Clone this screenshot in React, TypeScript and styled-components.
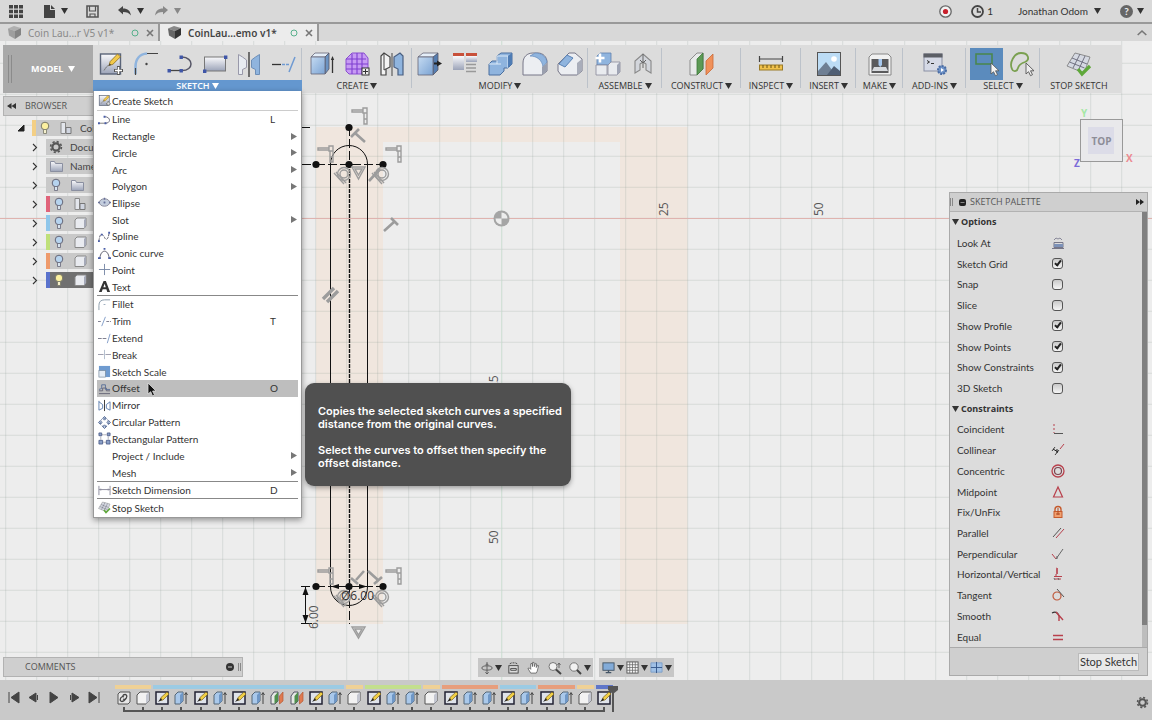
import React from 'react';
import styled, { createGlobalStyle, css } from 'styled-components';

const ui = '"Lato", "Open Sans", sans-serif';
const caps = '"Open Sans", "Noto Sans", sans-serif';

const GlobalStyle = createGlobalStyle`
  *, *::before, *::after { box-sizing: border-box; }
  html, body, #root { height: 100%; }
  body { margin: 0; background: #ededed; color: #333; font: 10px/14px ${ui}; overflow: hidden; }
  button { margin: 0; padding: 0; border: 0; background: none; color: inherit; font: inherit; }
  svg { display: block; flex: none; overflow: visible; }
  ul, h2 { margin: 0; padding: 0; list-style: none; font: inherit; }
`;

/* ---------- drawings ---------- */

type IconName = string;

const BLUE = '#8fb4de';
const LIGHT = '#c5dbf2';
const INK = '#5a6478';

const art: Record<IconName, React.ReactNode> = {
  createSketch: (
    <>
      <rect x="2.5" y="3" width="20" height="20" fill="url(#steel)" stroke={INK} strokeWidth="1.4" />
      <path d="M11 14.5l1.2-4L19.5 3l3 2.8-7.6 7.5z" fill="#f2c94a" stroke="#8a6b1d" strokeWidth=".8" />
      <path d="M11 14.5l.6-2 1.5 1.4z" fill="#333" />
      <path d="M6 19.5c2-3 3-5 5-5" stroke="#777" fill="none" />
      <path d="M20.500 15v9M16 19.500h9" stroke="#555" strokeWidth="3" />
      <path d="M20.500 16v7M17 19.500h7" stroke="#fff" strokeWidth="1.500" />
    </>
  ),
  filletBig: (
    <>
      <path d="M2.5 23v-7C2.500 8 7 3 14 2.500" fill="none" stroke={BLUE} strokeWidth="2.500" />
      <path d="M14 2.500h11M2.500 17v7" fill="none" stroke="#444" strokeWidth="1.200" />
      <circle cx="13.500" cy="13" r="1.200" fill="#444" />
    </>
  ),
  lineBig: (
    <>
      <path d="M2 19.500h13" stroke="#444" strokeWidth="1.300" />
      <path d="M15 19.500c12 0 12-13 0-13.500" fill="none" stroke="#556" strokeWidth="1.500" />
      <path d="M.5 18h3.400v3.400H.5zM12.500 18h3.400v3.400h-3.400zM12.500 4.500h3.400v3.400h-3.400z" fill="#3f56a8" />
    </>
  ),
  rectBig: (
    <>
      <rect x="2.500" y="6" width="21" height="14" fill="url(#steel)" stroke="#777" />
      <path d="M1 18.500h3.400v3.400H1zM22 4.500h3.400v3.400H22z" fill="#3f56a8" />
    </>
  ),
  mirrorBig: (
    <>
      <path d="M2.500 3.500v20h4v-5l4-2V9l-4-3z" fill="#e8ecf2" stroke="#99a" />
      <path d="M13 1v25" stroke="#333" strokeWidth="1.300" />
      <path d="M23.500 3.500v20h-4v-5l-4-2V9l4-3z" fill={BLUE} stroke="#6d8fb8" />
    </>
  ),
  extendBig: (
    <>
      <path d="M1 13.500h9" stroke="#333" strokeWidth="1.300" />
      <path d="M11 13.500h8" stroke="#6f9ad2" strokeWidth="1.500" strokeDasharray="3 1" />
      <path d="M24 6l-6 15" stroke="#6f9ad2" strokeWidth="1.500" />
    </>
  ),
  extrude: (
    <>
      <path d="M2 6l4-4h14l-4 4z" fill="#e5eef8" stroke="#667" strokeWidth=".8" />
      <path d="M16 6l4-4v16l-4 5z" fill="#6c93c2" stroke="#556" strokeWidth=".8" />
      <path d="M2 6h14v17H2z" fill="url(#sky)" stroke="#667" strokeWidth=".8" />
      <path d="M23.500 22V8" stroke="#333" strokeWidth="1.300" />
      <path d="M21.800 9l1.700-4 1.700 4z" fill="#333" />
    </>
  ),
  form: (
    <>
      <path d="M2 8l6-6h12l4 5v10l-6 6H5l-3-3z" fill="#c79bf3" stroke="#8a4fd0" />
      <path d="M2 13h22M2 18h16M2 8h20M8 3v20M13 2v21M18 2v21" fill="none" stroke="#7f3fd0" strokeWidth="1.100" />
      <rect x="18" y="17" width="7" height="7" fill="#eee" stroke="#333" />
      <path d="M19 20.500h5M21.500 18v5" stroke="#333" />
    </>
  ),
  mirrorCreate: (
    <>
      <path d="M2 5l3-3 6 4v10l-4 2v6H2z" fill="#f3f3f3" stroke="#444" strokeWidth="1.200" />
      <path d="M5 3v16l2-1M13 2v23" stroke="#444" />
      <path d="M24 5l-3-3-6 4v10l4 2v6h5z" fill={BLUE} stroke="#4a5f80" strokeWidth="1.200" />
    </>
  ),
  pressPull: (
    <>
      <path d="M1 6l5-4h15l-4 4z" fill="#e5eef8" stroke="#667" strokeWidth=".8" />
      <path d="M16 6l5-4v17l-5 5z" fill="#557db0" stroke="#556" strokeWidth=".8" />
      <path d="M1 6h15v18H1z" fill="url(#sky)" stroke="#667" strokeWidth=".8" />
      <path d="M17 12.500h4" stroke="#222" strokeWidth="2" />
      <path d="M20 9.500l5 3-5 3z" fill="#222" />
    </>
  ),
  replace: (
    <>
      <path d="M1 2h11v3H1zM14 2h11v3H14z" fill="#c8503a" />
      <path d="M1 5h11v14H1z" fill="url(#steel)" />
      <path d="M14 5h11v6H14z" fill="url(#steel)" />
      <path d="M14 13.500h10M14 17h10M14 20.500h10" stroke="#999" strokeWidth="1.500" />
    </>
  ),
  combine: (
    <>
      <path d="M10 5l4-3h11v11l-4 4h-4v3l-4 4H2V13l3-3h5z" fill={BLUE} stroke="#4a6f9f" />
      <path d="M10 5h11v12M2 13h8v-8M10 13h4" fill="none" stroke="#dceaf8" />
      <path d="M21 5l4-3v11l-4 4z" fill="#4f7cb4" />
    </>
  ),
  filletSolid: (
    <>
      <path d="M1 24V12C1 6 5 2 11 2h5c5 0 9 4 9 9v9l-5 4z" fill="#eceef2" stroke="#778" />
      <path d="M8 5l5-3c6 0 11 3 12 9l-4 5C20 9 15 5 8 5z" fill={BLUE} stroke="#5a82b5" strokeWidth=".6" />
      <path d="M20 24v-8l5-4v8z" fill="#9a9fae" />
    </>
  ),
  chamfer: (
    <>
      <path d="M1 13L12 2h6l7 6v12l-5 4H4l-3-4z" fill="#eceef2" stroke="#778" />
      <path d="M2 13l8-9 6 3-8 9z" fill={BLUE} stroke="#5a82b5" />
      <path d="M20 24V12l5-4v12z" fill="#a9adba" />
    </>
  ),
  component: (
    <>
      <path d="M2 5l3-3h11v9l-3 3H2z" fill={BLUE} stroke="#5f82ad" strokeWidth=".8" />
      <path d="M1 14h11v10H1zM13 14l3-3h9v10l-3 3h-9z" fill="#e9ebef" stroke="#889" strokeWidth=".8" />
      <path d="M22 24V14l3-3v10z" fill="#a0a5b5" />
      <path d="M5 2.500v9M.5 7h9" stroke="#fff" strokeWidth="2.500" />
    </>
  ),
  joint: (
    <>
      <path d="M5 22V10l8-7 8 7v12l-5-3v-6l-3-2-3 2v6z" fill="#d3d6dc" stroke="#888" strokeWidth="1.100" />
      <path d="M13 3v14M10 9l3 3 3-3" fill="none" stroke="#666" />
    </>
  ),
  construct: (
    <>
      <path d="M1 9l7-7h6v16l-6 6H1z" fill="#e8eaea" stroke="#777" strokeWidth=".8" />
      <path d="M8 8l6-6v16l-6 6z" fill="#5c9a55" stroke="#3e7a3a" strokeWidth=".8" />
      <path d="M17 10l7-7v14l-7 7z" fill="#f0915a" stroke="#c96a38" strokeWidth=".8" />
    </>
  ),
  inspect: (
    <>
      <path d="M1.500 8h23M1.500 5v6M24.500 5v6" stroke="#444" strokeWidth="1.200" />
      <rect x="1.500" y="14" width="23" height="5" fill="#f0c14b" stroke="#9a7a26" />
      <path d="M5 14v3M9 14v3M13 14v3M17 14v3M21 14v3" stroke="#6b5313" />
    </>
  ),
  insert: (
    <>
      <rect x="1.500" y="1.500" width="23" height="23" fill="#bcdcf5" stroke="#555" />
      <circle cx="18" cy="8" r="2.800" fill="#fff" />
      <path d="M2 20l8-9 6 8v5H2z" fill="#6f7f93" />
      <path d="M11 24l7-9 6 5v4z" fill="#4f5e73" />
    </>
  ),
  make: (
    <>
      <path d="M2 6l3-3h16l3 3v18H2z" fill="#f1f1f1" stroke="#888" />
      <rect x="4.500" y="8" width="17" height="14" fill="#5a5a5c" />
      <path d="M11.500 8h3.500v6l-1.700 2-1.800-2z" fill="#a7c8ee" />
      <path d="M7 16h12l2 4H5z" fill="#d7dade" />
    </>
  ),
  addins: (
    <>
      <rect x="2" y="3" width="18" height="17" fill="#d6dae6" stroke="#8a90a4" />
      <path d="M1.500 2.500h19v4h-19z" fill="#5c5f66" />
      <path d="M5 9.500l2.500 1.500L5 12.500M9 12.500h3" fill="none" stroke="#333" />
      <circle cx="20" cy="19" r="4" fill="#6f93c8" stroke="#4a6da5" strokeWidth="2" strokeDasharray="2 1" />
      <path d="M19 17l3 2-3 2z" fill="#fff" />
    </>
  ),
  select: (
    <>
      <rect x="2" y="3" width="16" height="10" fill="none" stroke="#49864a" strokeWidth="1.500" />
      <path d="M17 12v11l2.500-2.300 2 4 2-1-2-3.900H25z" fill="#f3f3f3" stroke="#555" strokeWidth=".8" />
    </>
  ),
  lasso: (
    <>
      <path d="M3 18C0 12 5 2 12 2c8 0 9 7 4 9-3 1-6 2-7 6-1 4-5 4-6 1z" fill="none" stroke="#7aa050" strokeWidth="1.800" />
      <path d="M17 12v11l2.500-2.300 2 4 2-1-2-3.900H25z" fill="#eee" stroke="#555" strokeWidth=".9" />
    </>
  ),
  stopSketch: (
    <>
      <path d="M9 2l15 4-6 16L1 15z" fill="#d5d9e2" stroke="#777" strokeWidth=".8" />
      <path d="M6 7l15 6M3.500 11l15 6M14 3l-7 14M19 5l-7 15" stroke="#667" strokeWidth=".9" fill="none" />
      <path d="M12 18l4 5 8-8" fill="none" stroke="#5fa83a" strokeWidth="3.200" />
    </>
  ),
};

function Art({ name, size = 26 }: { name: IconName; size?: number }) {
  return <svg width={size} height={size} viewBox="0 0 26 26" fill="none" aria-hidden="true">{art[name]}</svg>;
}

/* 14 px drawings for menus, palette, tree and timeline */
const SQ = '#4a5ea8';
const RED = '#b8404c';
const mini: Record<IconName, React.ReactNode> = {
  line: (<><path d="M1 11h8" stroke="#777" /><path d="M8 11c6 0 6-7-1-7" stroke="#667" /><path d="M0 10h2v2H0zM7 10h2v2H7zM6 3h2v2H6z" fill={SQ} /></>),
  ellipse: (<><ellipse cx="7" cy="7" rx="5.500" ry="4" fill="#c3cddd" stroke="#889" /><path d="M6 7h2M7 6v2M0 7h2M12 7h2M7 2v2" stroke="#667099" strokeWidth="1.500" /></>),
  spline: (<><path d="M1 12C2 2 5 4 7 8s4 2 5-5" stroke="#556" strokeDasharray="3 1" /><path d="M0 11h2v2H0zM11 2h2v2h-2zM3 4h2v2H3z" fill={SQ} /></>),
  conic: (<><path d="M2 12C3 2 11 2 12 12" stroke="#556" /><path d="M0 11h3v2H0zM11 11h3v2h-3zM6 1h2v2H6z" fill={SQ} /></>),
  point: <path d="M7 1v12M1 7h12" stroke="#7787a5" />,
  text: <path d="M1 13L6 1h2.500L13 13h-3l-1-3H5l-1 3zM5.800 7.800h2.600L7.100 4z" fill="#333" />,
  fillet: (<><path d="M1 13V8c0-4 2-6 6-6h6" stroke="#89a" /><path d="M6 7h2" stroke="#9ab" /></>),
  trim: (<><path d="M0 7h4M9 7h5" stroke="#778" strokeDasharray="3 1" /><path d="M8 2L4 12" stroke="#7f9cc8" /></>),
  extend: (<><path d="M0 7h9" stroke="#778" strokeDasharray="4 1" /><path d="M13 2l-3 10" stroke="#7f9cc8" /></>),
  break: (<><path d="M0 7h6M8 7h6" stroke="#99a" /><path d="M7 2v10" stroke="#b0bccc" /></>),
  scale: (<><rect x="1" y="1" width="12" height="12" fill="#6f9bd0" /><rect x="1" y="6" width="7" height="7" fill="#e5edf6" stroke="#789" strokeWidth=".7" /></>),
  offset: (<><path d="M1 12.500h12M1 9.500h4v-3h4v3h4" stroke="#667" /><path d="M1 8l3-1V3h4v5h5" stroke="#5a6f98" /></>),
  mirror: (<><path d="M1 2v10M1 3l4 3v4l-4 2M13 3L9 6v4l4 2z" stroke="#5f7fb0" /><path d="M7 1v12" stroke="#333" /></>),
  circular: (<g fill="#b8c9e2" stroke="#4a5f8a" strokeWidth=".9"><path d="M7 .5l2 2-2 2-2-2zM7 9.500l2 2-2 2-2-2zM2.500 5l2 2-2 2-2-2zM11.500 5l2 2-2 2-2-2z" /><circle cx="7" cy="7" r="4.500" fill="none" strokeDasharray="2 2" /></g>),
  rectangular: (<><path d="M4 3h6M3 5v4M11 5v4M4 11h6" stroke="#667" strokeDasharray="1 1" /><path d="M1 1h3v3H1zM10 1h3v3h-3zM1 9h4v4H1zM9 9h4v4H9z" fill="#8a9fc6" stroke="#3f5080" strokeWidth=".8" /></>),
  dimension: <path d="M1 2v10M13 2v10M1 6h12M3 5v2M11 5v2" stroke="#889" />,
  lookAt: (<><path d="M1 12.500h12M3 6.500h9v5H3z" stroke="#778" /><path d="M3 8h9v3H3z" fill="#7d92b8" /><path d="M3 4l2-2 2 1 2-1 2 2" stroke="#889" /></>),
  coincident: (<><path d="M3 2v9" stroke={RED} strokeDasharray="2 2" /><path d="M3 11.500h9" stroke="#555" /></>),
  collinear: (<><path d="M1 8l3-4M4 12l4-5" stroke="#444" /><path d="M2 6l5 3M6 6v4" stroke="#222" /><path d="M9 6l4-5" stroke={RED} /></>),
  concentric: (<><circle cx="7" cy="7" r="6" stroke={RED} strokeWidth="1.300" /><circle cx="7" cy="7" r="3.500" stroke="#7a4550" strokeWidth="1.200" /></>),
  midpoint: <path d="M7 2l4.500 10h-9z" stroke={RED} strokeWidth="1.200" />,
  fix: (<><path d="M4 7V4.500a3 3 0 016 0V7" stroke="#c55a2c" strokeWidth="1.400" /><rect x="3" y="6.500" width="8" height="6" fill="#f0a070" stroke="#c55a2c" /><path d="M5 9h4M7 3v7" stroke="#b04a20" /></>),
  parallel: (<><path d="M2 11l8-9" stroke="#555" /><path d="M5 12l8-9" stroke={RED} /></>),
  perpendicular: (<><path d="M1 7l4 5" stroke={RED} /><path d="M5 12l7-10M6 12V9" stroke="#666" /></>),
  horizontal: (<><path d="M5 1l2 1-2 1 2 1-2 1 2 1-2 1v2M3 9.500h8M4 12h6" stroke={RED} /><path d="M3 11l1 2M7 11l1 2" stroke="#666" /></>),
  tangent: (<><circle cx="6" cy="8" r="4" stroke="#c05a3c" strokeWidth="1.200" /><path d="M6 1l7 8" stroke="#555" /></>),
  smooth: (<><path d="M1 4c4-2 6 0 7 3" stroke="#333" strokeWidth="1.300" /><path d="M5 3l7 8M8 6v6" stroke={RED} strokeWidth="1.400" /></>),
  equal: <path d="M2 5.500h10M2 9.500h10" stroke={RED} strokeWidth="1.300" />,
  bulb: (<><circle cx="7" cy="5" r="3.800" fill="#b6d3ee" stroke="#667" /><path d="M5.500 8.500h3v4h-3z" fill="#d7e3ee" stroke="#667" strokeWidth=".8" /></>),
  bulbOn: (<><circle cx="7" cy="5" r="3.800" fill="#fbf0a0" stroke="#776" /><path d="M5.500 8.500h3v4h-3z" fill="#f4efcc" stroke="#776" strokeWidth=".8" /></>),
  folder: (<><path d="M1.500 12.500v-10h4l1 2h7v8z" fill="url(#steel)" stroke="#8a8fa0" /></>),
  parts: (<><path d="M2 1.500h4.500v11H2z" fill="#e3e6ec" stroke="#888" /><path d="M7 6.500h5v6H7z" fill="#d0d5e0" stroke="#777" /></>),
  body: (<><path d="M2 4l2-2h9v8l-2 2.500H2z" fill="#e9ebf0" stroke="#888" /><path d="M11 12V4l2-2v8z" fill="#a5a9b8" /></>),
  gear: (<><circle cx="7" cy="7" r="3.600" stroke="#555" strokeWidth="2.200" /><circle cx="7" cy="7" r="5.400" stroke="#555" strokeWidth="1.600" strokeDasharray="2.200 2.040" /></>),
  tLink: (<><path d="M1 3l2-2h10v10l-2 2H1z" fill="#e6e6e6" stroke="#555" /><path d="M7 6l-1.500-.5c-3 1.500-3 5-.5 5s3-2 4-3M6 8l1.500.5c3-1.500 3-5 .5-5S6 5 5.500 6" stroke="#444" strokeWidth="1.300" /></>),
  tBox: (<><path d="M1 4l3-3h9v9l-3 3H1z" fill="#f2f2f2" stroke="#555" /><path d="M10 13V4l3-3v9z" fill="#c3c6d0" /></>),
  tSketch: (<><rect x="1" y="1" width="12" height="12" fill="#dfe3ea" stroke="#223" strokeWidth="1.500" /><path d="M5 9.500l1-3L12 1l2 2-6 6z" fill="#f1cf45" stroke="#776020" strokeWidth=".7" /><path d="M3 11l3-4 1 2z" fill="#222" /></>),
  tExtrude: (<><path d="M1 4l3-3h5v9l-3 3H1z" fill="#a9c8ea" stroke="#567" /><path d="M6 13V4l3-3v9z" fill="#6f97c6" /><path d="M12 13V2M10.500 4L12 1.500 13.500 4" stroke="#444" /></>),
  tPlane: (<><path d="M1 5l3-4h4v9l-3 3H1z" fill="#e4e8e4" stroke="#556" /><path d="M4.500 13V5L8 1v9z" fill="#4f8f4c" /><path d="M9.500 13V5L13 1v9z" fill="#e07a50" stroke="#b55a34" strokeWidth=".7" /></>),
  orbit: (<><ellipse cx="7" cy="7" rx="6" ry="2.500" stroke="#555" /><path d="M7 0v14M5 12l2 2 2-2M9 4L7 2 5 4" stroke="#555" /></>),
  lookNav: (<><rect x="2" y="5" width="10" height="8" fill="#ddd" stroke="#444" /><path d="M4 8h6v2H4z" stroke="#444" /><path d="M3 3l2-1M6 2h2M9 2l2 1" stroke="#444" /></>),
  hand: <path d="M4 13L1 8l1.500-.5L4 9V3l1.500-.5L6 6V1.500h1.500L8 6l1-3.500 1.200.5L10 7l1.500-2.500 1 .5-1.500 6-1 2z" fill="#fff" stroke="#555" strokeWidth=".8" />,
  zoom: (<><circle cx="5" cy="5.500" r="4" fill="#f2f2f2" stroke="#777" /><path d="M8 8.500l5 4.500" stroke="#444" strokeWidth="2" /><path d="M11 2v5M9.500 4L11 2l1.500 2" stroke="#666" /></>),
  zoomWin: (<><circle cx="6" cy="6" r="4.200" fill="#f2f2f2" stroke="#777" /><path d="M9 9l4 4" stroke="#444" strokeWidth="2" /></>),
  monitor: (<><rect x="1" y="2" width="12" height="8" fill="#82abd8" stroke="#456" /><path d="M7 10v2M4 12.500h6" stroke="#456" strokeWidth="1.500" /></>),
  grid: (<><rect x="1" y="1" width="12" height="12" fill="#f6f6f6" stroke="#555" /><path d="M4 1v12M7 1v12M10 1v12M1 4h12M1 7h12M1 10h12" stroke="#666" strokeWidth=".8" /></>),
  split: (<><path d="M1 2h12v10H1z" fill="#9fc0e6" stroke="#7d9fc8" /><path d="M7 1v12M1 7h12" stroke="#34568a" /></>),
  first: <path d="M2 2v11M12 2v11L4 7.500z" fill="#444" stroke="#444" />,
  prev: <path d="M9 3v9L2 7.500zM10.500 5v5" fill="#444" stroke="#444" />,
  play: <path d="M3 2v11l8-5.500z" fill="#444" stroke="#444" />,
  next: <path d="M5 3v9l7-4.500zM3.500 5v5" fill="#444" stroke="#444" />,
  last: <path d="M12 2v11M2 2v11l8-5.500z" fill="#444" stroke="#444" />,
};

function Mini({ name, size = 14 }: { name: IconName; size?: number }) {
  if (art[name]) return <Art name={name} size={size} />;
  return <svg width={size} height={size} viewBox="0 0 14 14" fill="none" aria-hidden="true">{mini[name]}</svg>;
}

function Caret({ size = 7, color = '#333' }: { size?: number; color?: string }) {
  return <svg width={size} height="6" viewBox="0 0 8 6" preserveAspectRatio="none" aria-hidden="true"><path d="M0 0h8L4 6z" fill={color} /></svg>;
}

/* ---------- page frame ---------- */

const Page = styled.div`
  display: flex;
  flex-direction: column;
  height: 100%;
`;

const TopBar = styled.header`
  display: flex;
  align-items: center;
  flex: none;
  height: 24px;
  padding: 0 8px 0 9px;
  background: #d9d9d9;
  border-bottom: 2px solid #999;
`;

const BarButton = styled.button<{ $gap: number; $inner?: number }>`
  display: flex;
  align-items: center;
  gap: ${(p) => p.$inner ?? 6}px;
  margin-right: ${(p) => p.$gap}px;
`;

const Spacer = styled.div`
  flex: 1;
`;

const TabBar = styled.nav`
  display: flex;
  flex: none;
  height: 17px;
  background: #d8d8d8;
`;

const Tab = styled.div<{ $active?: boolean }>`
  display: flex;
  align-items: center;
  width: ${(p) => (p.$active ? 159 : 160)}px;
  padding: 0 4px 0 8px;
  border-right: 2px solid #999;
  color: #8a8a8a;
  font: 10px/16px "Noto Sans", sans-serif;
  ${(p) => p.$active && css`
    background: #ececec;
    color: #444;
    font-weight: 600;
  `}
  span { flex: 1; padding-left: 7px; white-space: nowrap; }
  button { margin-left: 7px; }
`;

const CollapseButton = styled.button`
  margin-left: auto;
  padding-right: 5px;
`;

const Workspace = styled.main`
  position: relative;
  display: grid;
  grid-template: auto 1fr auto / 1fr auto 1fr;
  flex: 1;
  min-height: 0;
  padding: 4px 3px 3px;
`;

const CanvasLayer = styled.div`
  position: absolute;
  inset: 0;
  overflow: hidden;
`;

/* ---------- toolbar ---------- */

const Toolbar = styled.div`
  position: relative;
  grid-column: 1 / -1;
  display: flex;
  height: 48px;
  margin-right: 27px;
  background: #dcdcdc;
`;

const Mode = styled.button`
  display: flex;
  align-items: center;
  width: 90px;
  padding-left: 5px;
  gap: 5px;
  background: #a9a9a9;
  color: #fff;
  font: 700 9px/12px ${caps};
  &::before {
    content: '';
    width: 4px;
    height: 28px;
    margin-right: 14px;
    border: solid #8b8b8b;
    border-width: 0 1px;
  }
`;

const Group = styled.section<{ $w: number; $pad: number }>`
  display: flex;
  flex-direction: column;
  width: ${(p) => p.$w}px;
  position: relative;
  &:not(:last-child)::after {
    content: '';
    position: absolute;
    right: 0;
    top: 3px;
    bottom: 5px;
    border-right: 1px solid #bcc2ca;
  }
  > div {
    display: flex;
    flex: 1;
    padding: 3px ${(p) => p.$pad}px 0;
  }
`;

const Tool = styled.button<{ $on?: boolean }>`
  display: flex;
  flex: 1;
  align-items: center;
  justify-content: center;
  height: 32px;
  ${(p) => p.$on && css`
    margin: 0 2px;
    background: #5b8bbd;
  `}
`;

const GroupLabel = styled.button<{ $open?: boolean }>`
  display: flex;
  align-items: center;
  justify-content: center;
  gap: 2px;
  height: 11px;
  margin-bottom: 2px;
  white-space: nowrap;
  font: 9px/11px ${caps};
  ${(p) => p.$open && css`
    position: relative;
    z-index: 1;
    background: #6497cf;
    color: #fff;
    font-weight: 600;
  `}
`;

/* ---------- drop-down menu ---------- */

const Menu = styled.div`
  position: absolute;
  z-index: 5;
  left: 93px;
  top: 50px;
  width: 209px;
  padding: 0 3px 1px;
  background: #fff;
  border: 1px solid #999;
  border-top: 0;
  box-shadow: 0 2px 6px rgba(0, 0, 0, 0.4);
`;

const MenuGroup = styled.div<{ $h: number }>`
  display: grid;
  grid-auto-rows: 1fr;
  height: ${(p) => p.$h}px;
  & + & { border-top: 1px solid #888; }
  &:first-child + & { border-color: #ccc; }
`;

const MenuItem = styled.button<{ $hover?: boolean }>`
  display: grid;
  grid-template-columns: 13px 1fr 20px 7px;
  align-items: center;
  gap: 1px;
  padding-left: 1px;
  text-align: left;
  background: ${(p) => (p.$hover ? '#bebebe' : 'none')};
`;

const Pointer = styled.svg`
  position: absolute;
  z-index: 7;
  left: 147px;
  top: 341px;
`;

const Tooltip = styled.div`
  position: absolute;
  z-index: 6;
  left: 305px;
  top: 342px;
  width: 266px;
  padding: 22px 8px 16px 13px;
  border-radius: 9px;
  background: #505050;
  color: #fff;
  box-shadow: 0 2px 5px rgba(0, 0, 0, 0.35);
  font: 600 11px/13px Inter, sans-serif;
  p { margin: 0 0 13px; }
  p:last-child { margin: 0; }
`;

/* ---------- browser tree ---------- */

const Browser = styled.aside`
  position: relative;
  grid-column: 1;
  grid-row: 2;
  width: 240px;
  margin-top: 3px;
`;

const PanelTitle = styled.h2`
  display: flex;
  align-items: center;
  height: 20px;
  background: #cfcfcf;
  border: 1px solid #b2b2b2;
  color: #555;
  font: 9px/12px ${caps};
`;

const Tree = styled.ul`
  display: flex;
  flex-direction: column;
  gap: 3px;
  width: 90px;
  padding-top: 4px;
`;

const TreeRow = styled.li<{ $root?: boolean; $color?: string; $active?: boolean }>`
  display: flex;
  height: 16px;
  padding-left: ${(p) => (p.$root ? 14 : 28)}px;
  > button { display: flex; align-items: center; width: 15px; }
  > div {
    display: flex;
    align-items: center;
    gap: 7px;
    flex: 1;
    min-width: 0;
    overflow: hidden;
    padding-left: ${(p) => (p.$color ? 2 : 3)}px;
    border-left: ${(p) => (p.$color ? `4px solid ${p.$color}` : '0')};
    background: ${(p) => (p.$active ? '#707070' : '#c9c9c9')};
    white-space: nowrap;
    color: #444;
  }
  span { flex: 1; min-width: 0; overflow: hidden; }
`;

/* ---------- right column ---------- */

const Side = styled.aside`
  position: relative;
  grid-column: 3;
  grid-row: 2 / 4;
  justify-self: end;
  display: flex;
  flex-direction: column;
  width: 199px;
  margin: 0 1px 1px 0;
`;

const Cube = styled.svg`
  width: 60px;
  height: 99px;
  align-self: flex-end;
  margin-right: 15px;
  font: 700 10px ${caps};
`;

const Palette = styled.section`
  display: flex;
  flex-direction: column;
  flex: 1;
  min-height: 0;
  background: #dcdcdc;
  border: 1px solid #aaa;
  h2 { height: 19px; border-width: 0 0 1px; padding: 0 3px 0 0; }
`;

const Grip = styled.i`
  width: 3px;
  height: 8px;
  border: solid #888;
  border-width: 0 1px;
`;

const PaletteBody = styled.div`
  display: flex;
  flex: 1;
  min-height: 0;
`;

const Rows = styled.div`
  display: grid;
  grid-auto-rows: 1fr;
  flex: 1;
`;

const SectionHead = styled.button`
  display: flex;
  align-items: center;
  gap: 2px;
  padding-left: 2px;
  font: 700 9px/12px ${caps};
`;

const Row = styled.div`
  display: grid;
  grid-template-columns: 94px 14px;
  align-items: center;
  padding-left: 7px;
  white-space: nowrap;
`;

const Check = styled.input`
  appearance: none;
  width: 11px;
  height: 11px;
  margin: 0 1px;
  border: 1px solid #555;
  border-radius: 3px;
  background: linear-gradient(#c9c9c9, #f5f5f5);
  &:checked::after {
    content: '';
    display: block;
    width: 4px;
    height: 7px;
    margin: 0 0 0 3px;
    border: solid #222;
    border-width: 0 2px 2px 0;
    transform: rotate(38deg);
  }
`;

const Scroll = styled.div`
  width: 5px;
  background: #bdbdbd;
  &::before { content: ''; display: block; height: 95%; background: #808080; }
`;

const PaletteFoot = styled.footer`
  display: flex;
  justify-content: flex-end;
  align-items: center;
  height: 28px;
  padding-right: 8px;
  background: #cfcfcf;
  border-top: 1px solid #aaa;
  button {
    width: 61px;
    height: 18px;
    background: #e9e9e9;
    border: 1px solid #bbb;
    font: 11px/14px ${ui};
    white-space: nowrap;
  }
`;

/* ---------- bottom ---------- */

const Comments = styled.section`
  position: relative;
  grid-column: 1;
  grid-row: 3;
  width: 240px;
  h2 { padding: 0 1px 0 21px; gap: 4px; }
  span { flex: 1; }
`;

const Nav = styled.div`
  position: relative;
  grid-column: 2;
  grid-row: 3;
  display: flex;
  gap: 6px;
  height: 19px;
  margin-top: 1px;
  > div { display: flex; align-items: center; background: #c7c7c7; }
  > div + div { padding: 0 1px 0 2px; }
`;

const NavButton = styled.button<{ $w: number }>`
  display: flex;
  align-items: center;
  justify-content: center;
  gap: 2px;
  width: ${(p) => p.$w}px;
`;

const TimelineBar = styled.footer`
  position: relative;
  display: flex;
  flex: none;
  height: 40px;
  padding: 5px 3px 0 4px;
  background: #c9c9c9;
`;

const Playback = styled.div`
  display: flex;
  height: 24px;
  margin-right: 10px;
  button { display: flex; align-items: center; justify-content: center; width: 20px; }
`;

const Track = styled.div`
  position: relative;
  display: grid;
  grid-template-columns: repeat(26, 1fr);
  grid-template-rows: 4px 18px 3px 2px;
  width: 500px;
`;

const Strip = styled.i<{ $n: number; $c: string }>`
  grid-column: span ${(p) => p.$n};
  margin: 0 1px;
  background: ${(p) => p.$c};
`;

const Feature = styled.button`
  display: flex;
  align-items: center;
  justify-content: center;
`;

const Tick = styled.i`
  width: 2px;
  margin: 0 auto;
  background: #555;
`;

const Baseline = styled.i`
  grid-column: 1 / -1;
  margin: 0 9px;
  background: #555;
`;

const Playhead = styled.svg`
  position: absolute;
  right: -4px;
  top: 1px;
`;

/* ---------- model canvas ---------- */

const Hammer = ({ x, y }: { x: number; y: number }) => (
  <path d={`M${x} ${y + 2}h11v2h-11zM${x + 11} ${y}h4v5h-4zM${x + 12} ${y + 5}h3v6h-3zM${x + 12} ${y + 11}h3v5h-3z`} />
);

const Ring = ({ x, y }: { x: number; y: number }) => (
  <>
    <circle cx={x} cy={y} r="6.500" />
    <circle cx={x} cy={y} r="4" />
    <path d={`M${x - 10} ${y - 1}l10 11M${x - 8} ${y - 2}l10 11`} />
  </>
);

const cols = Array.from({ length: 60 }, (_, i) => 5.7 + i * 31);
const rows = Array.from({ length: 40 }, (_, i) => 32.3 + i * 31);

function Canvas() {
  return (
    <CanvasLayer>
      <svg width="100%" height="100%" fontFamily="Open Sans, sans-serif">
        <defs>
          <linearGradient id="steel" x1="0" y1="0" x2="0" y2="1"><stop offset="0" stopColor="#fafafc" /><stop offset="1" stopColor="#9ba3b8" /></linearGradient>
          <linearGradient id="sky" x1="0" y1="0" x2="1" y2="1"><stop offset="0" stopColor={LIGHT} /><stop offset="1" stopColor="#7ba3d3" /></linearGradient>
        </defs>
        <g transform="translate(0 -41)">
          <path d="M316 127h371.500v497H620V142H383v482h-67z" fill="#f0e6de" />
          <g stroke="#8a9a90" strokeOpacity=".22">
            {cols.map((x) => <path key={x} d={`M${x} 0V1400`} />)}
            {rows.map((y) => <path key={y} d={`M0 ${y}H2000`} />)}
          </g>
          <path d="M0 218.500H2000" stroke="#dfb3af" />
          <path d="M501.700 0V1400" stroke="#cfe3d5" strokeOpacity=".7" />
          <g fill="#a5a5a5"><circle cx="501.500" cy="218.500" r="8" /><path d="M501.500 212.500a6 6 0 016 6h-6zM501.500 224.500a6 6 0 01-6-6h6z" fill="#ededed" /></g>

          <g stroke="#111" fill="none">
            <path d="M330.500 587V164a18.500 18.500 0 0137 0v423a18.500 18.500 0 01-37 0z" />
            <path d="M349.500 127v37M349.500 587v37" strokeDasharray="9 3" />
            <path d="M349.500 164v423" strokeWidth="1.400" strokeDasharray="4 1" />
            <path d="M302 164.500h14M316 164.500h67M316 586.500h67" strokeDasharray="9 3" />
            <path d="M302 127.500h8M301 586.500h9M301 623.500h11M305.500 587v36M333 586.500h34" />
          </g>
          <g fill="#111">
            <path d="M305.500 587l3 8h-6zM305.500 623l3-8h-6zM331 586.500l8-2.500v5zM367 586.500l-8-2.500v5z" />
            {[[349, 127], [316, 164], [349, 164], [383, 164], [316, 586], [349, 586], [383, 586]].map(([x, y]) => (
              <circle key={`${x}-${y}`} cx={x} cy={y + 0.5} r="3.600" />
            ))}
          </g>
          <g stroke="#9c9c9c" fill="none" strokeWidth="1.400">
            <Hammer x={352} y={108} /><Hammer x={318} y={146} /><Hammer x={386} y={146} />
            <Hammer x={318} y={568} /><Hammer x={386} y={568} />
            <Ring x={344} y={174} /><Ring x={382} y={174} /><Ring x={344} y={597} /><Ring x={382} y={597} />
            <path d="M352 167h13l-6.500 12zM355 169h7l-3.500 6zM352 627h13l-6.500 11zM355 629h7l-3.500 6z" />
            <path d="M351 137l8-8M355 133l10 9M384 231l10-9M391 218l7 7M364 571l-8 9M351 578l7 6M368 571l10 9M374 584l8-7M369 181l11-12" strokeWidth="2.600" />
            <path d="M323 299l11-11M327 302l11-11" strokeWidth="3.400" />
          </g>
          <g fill="#555" fontSize="12">
            <text transform="translate(668 216) rotate(-90)">25</text>
            <text transform="translate(823 216) rotate(-90)">50</text>
            <text transform="translate(498 389) rotate(-90)">25</text>
            <text transform="translate(498 544) rotate(-90)">50</text>
            <text transform="translate(318 629) rotate(-90)">6.00</text>
            <text x="341" y="600" fill="#333">Ø6.00</text>
          </g>
        </g>
      </svg>
    </CanvasLayer>
  );
}

/* ---------- data ---------- */

const groups: { label: string; w: number; pad: number; icons: string[]; on?: string; plain?: boolean }[] = [
  { label: 'CREATE', w: 110, pad: 2, icons: ['extrude', 'form', 'mirrorCreate'] },
  { label: 'MODIFY', w: 176, pad: 1, icons: ['pressPull', 'replace', 'combine', 'filletSolid', 'chamfer'] },
  { label: 'ASSEMBLE', w: 74, pad: 2, icons: ['component', 'joint'] },
  { label: 'CONSTRUCT', w: 79, pad: 0, icons: ['construct'] },
  { label: 'INSPECT', w: 60, pad: 0, icons: ['inspect'] },
  { label: 'INSERT', w: 55, pad: 0, icons: ['insert'] },
  { label: 'MAKE', w: 47, pad: 0, icons: ['make'] },
  { label: 'ADD-INS', w: 63, pad: 0, icons: ['addins'] },
  { label: 'SELECT', w: 74, pad: 2, icons: ['select', 'lasso'], on: 'select' },
  { label: 'STOP SKETCH', w: 78, pad: 0, icons: ['stopSketch'], plain: true },
];

type Item = [label: string, icon?: string, key?: string];
const menu: { h: number; items: Item[] }[] = [
  { h: 19, items: [['Create Sketch', 'createSketch']] },
  {
    h: 185,
    items: [['Line', 'line', 'L'], ['Rectangle', '', '>'], ['Circle', '', '>'], ['Arc', '', '>'], ['Polygon', '', '>'], ['Ellipse', 'ellipse'],
      ['Slot', '', '>'], ['Spline', 'spline'], ['Conic curve', 'conic'], ['Point', 'point'], ['Text', 'text']],
  },
  {
    h: 186,
    items: [['Fillet', 'fillet'], ['Trim', 'trim', 'T'], ['Extend', 'extend'], ['Break', 'break'], ['Sketch Scale', 'scale'], ['Offset', 'offset', 'O'],
      ['Mirror', 'mirror'], ['Circular Pattern', 'circular'], ['Rectangular Pattern', 'rectangular'], ['Project / Include', '', '>'], ['Mesh', '', '>']],
  },
  { h: 17, items: [['Sketch Dimension', 'dimension', 'D']] },
  { h: 18, items: [['Stop Sketch', 'stopSketch']] },
];

const tree: { icons: string[]; text?: string; color?: string; active?: boolean }[] = [
  { icons: ['gear'], text: 'Document' },
  { icons: ['folder'], text: 'Named' },
  { icons: ['bulb', 'folder'] },
  { icons: ['bulb', 'parts'], color: '#e0637a' },
  { icons: ['bulb', 'body'], color: '#8fc6ea' },
  { icons: ['bulb', 'body'], color: '#bfe07a' },
  { icons: ['bulb', 'body'], color: '#ee9a6c' },
  { icons: ['bulbOn', 'body'], color: '#5a72cc', active: true },
];

const options: [string, boolean][] = [
  ['Sketch Grid', true], ['Snap', false], ['Slice', false], ['Show Profile', true],
  ['Show Points', true], ['Show Constraints', true], ['3D Sketch', false],
];

const constraints: [string, string][] = [
  ['Coincident', 'coincident'], ['Collinear', 'collinear'], ['Concentric', 'concentric'], ['Midpoint', 'midpoint'],
  ['Fix/UnFix', 'fix'], ['Parallel', 'parallel'], ['Perpendicular', 'perpendicular'], ['Horizontal/Vertical', 'horizontal'],
  ['Tangent', 'tangent'], ['Smooth', 'smooth'], ['Equal', 'equal'],
];

const strips: [number, string][] = [
  [2, '#efd196'], [10, '#9ccbe4'], [1, '#efd196'], [3, '#c3df8e'], [1, '#efd196'],
  [3, '#e79e7c'], [2, '#9ccbe4'], [2, '#e79e7c'], [1, '#efd196'], [1, '#5f76c9'],
];

const featureKinds: Record<string, string> = { l: 'tLink', b: 'tBox', s: 'tSketch', e: 'tExtrude', p: 'tPlane' };
const features = 'lbseseseppsebseebseesesebs'.split('');

/* ---------- app ---------- */

export default function App() {
  return (
    <Page>
      <GlobalStyle />
      <TopBar>
        <BarButton $gap={21} aria-label="Data panel">
          <svg width="14" height="13" viewBox="0 0 14 13"><path d="M0 0h4v3.500H0zM5 0h4v3.500H5zM10 0h4v3.500h-4zM0 4.700h4v3.500H0zM5 4.700h4v3.500H5zM10 4.700h4v3.500h-4zM0 9.400h4V13H0zM5 9.400h4V13H5zM10 9.400h4V13h-4z" fill="#444" /></svg>
        </BarButton>
        <BarButton $gap={18} aria-label="File">
          <svg width="11" height="13" viewBox="0 0 11 13"><path d="M0 0h6v5h5v8H0zM7 0l4 4H7z" fill="#444" /></svg>
          <Caret />
        </BarButton>
        <BarButton $gap={19} aria-label="Save">
          <svg width="13" height="13" viewBox="0 0 13 13"><path d="M1 1h11v11H1z" fill="none" stroke="#555" strokeWidth="1.600" /><path d="M3.500 1v5h6V1M4 12V9h5v3" fill="none" stroke="#555" strokeWidth="1.200" /></svg>
        </BarButton>
        <BarButton $gap={11} aria-label="Undo">
          <svg width="13" height="10" viewBox="0 0 13 10"><path d="M5 0v2.500c5 0 7 2 8 7C11 7 9 6 5 6v2.500L0 4z" fill="#444" /></svg>
          <Caret />
        </BarButton>
        <BarButton $gap={0} aria-label="Redo">
          <svg width="13" height="10" viewBox="0 0 13 10"><path d="M8 0v2.500c-5 0-7 2-8 7C2 7 4 6 8 6v2.500L13 4z" fill="#888" /></svg>
          <Caret color="#888" />
        </BarButton>
        <Spacer />
        <BarButton $gap={19} aria-label="Record">
          <svg width="13" height="13" viewBox="0 0 13 13"><circle cx="6.500" cy="6.500" r="5.700" fill="#f2f2f2" stroke="#666" strokeWidth="1.300" /><circle cx="6.500" cy="6.500" r="2.600" fill="#c8202c" /></svg>
        </BarButton>
        <BarButton $gap={25} $inner={3} aria-label="Job status">
          <svg width="13" height="13" viewBox="0 0 13 13"><circle cx="6.500" cy="6.500" r="5.500" fill="none" stroke="#444" strokeWidth="1.800" /><path d="M6.500 3v4H10" fill="none" stroke="#444" strokeWidth="1.500" /></svg>
          1
        </BarButton>
        <BarButton $gap={19}>Jonathan Odom <Caret /></BarButton>
        <BarButton $gap={0} $inner={4} aria-label="Help">
          <svg width="13" height="13" viewBox="0 0 13 13"><circle cx="6.500" cy="6.500" r="6.500" fill="#666" /><text x="6.500" y="10" textAnchor="middle" fontSize="10" fontWeight="700" fill="#eee">?</text></svg>
          <Caret />
        </BarButton>
      </TopBar>

      <TabBar>
        {['Coin Lau...r V5 v1*', 'CoinLau...emo v1*'].map((name, i) => (
          <Tab key={name} $active={i === 1}>
            <svg width="13" height="13" viewBox="0 0 13 13" opacity={i ? 1 : 0.5}><path d="M0 2.500L6 0l7 2-6 3z" fill="#888" /><path d="M0 2.500L7 5v8L1 9.500z" fill="#666" /><path d="M7 5l6-3v7l-6 4z" fill="#333" /></svg>
            <span>{name}</span>
            <svg width="8" height="8" viewBox="0 0 8 8"><circle cx="4" cy="4" r="3" fill="none" stroke="#58b08c" /></svg>
            <button aria-label="Close tab"><svg width="8" height="8" viewBox="0 0 8 8"><path d="M1 1l6 6M7 1L1 7" stroke="#777" strokeWidth="1.600" /></svg></button>
          </Tab>
        ))}
        <CollapseButton aria-label="Collapse toolbar"><svg width="10" height="6" viewBox="0 0 10 6"><path d="M.7 5L5 1l4.300 4" fill="none" stroke="#777" strokeWidth="1.600" /></svg></CollapseButton>
      </TabBar>

      <Workspace>
        <Canvas />

        <Toolbar>
          <Mode>MODEL <Caret color="#fff" /></Mode>
          <Group $w={209} $pad={1}>
            <div>
              {['createSketch', 'filletBig', 'lineBig', 'rectBig', 'mirrorBig', 'extendBig'].map((n) => <Tool key={n} aria-label={n}><Art name={n} /></Tool>)}
            </div>
            <GroupLabel $open>SKETCH<Caret color="#fff" /></GroupLabel>
          </Group>
          {groups.map((g) => (
            <Group key={g.label} $w={g.w} $pad={g.pad}>
              <div>{g.icons.map((n) => <Tool key={n} $on={g.on === n} aria-label={n}><Art name={n} /></Tool>)}</div>
              <GroupLabel>{g.label}{!g.plain && <Caret />}</GroupLabel>
            </Group>
          ))}
        </Toolbar>

        <Browser>
          <PanelTitle>
            <svg width="21" height="8" viewBox="0 0 21 8"><path d="M7.500 1v6L3 4zM12 1v6L7.500 4z" fill="#333" /></svg>
            BROWSER
          </PanelTitle>
          <Tree>
            <TreeRow $root $color="#f3cf85">
              <button aria-label="Collapse"><svg width="8" height="8" viewBox="0 0 8 8"><path d="M7 1v6H1z" fill="#222" stroke="#222" /></svg></button>
              <div><Mini name="bulbOn" /><Mini name="parts" /><span>Coin</span></div>
            </TreeRow>
            {tree.map((r, i) => (
              <TreeRow key={i} $color={r.color} $active={r.active}>
                <button aria-label="Expand"><svg width="8" height="9" viewBox="0 0 8 9"><path d="M2 1l3.500 3.500L2 8" fill="none" stroke="#333" strokeWidth="1.100" /></svg></button>
                <div>{r.icons.map((n) => <Mini key={n} name={n} />)}{r.text && <span>{r.text}</span>}</div>
              </TreeRow>
            ))}
          </Tree>
        </Browser>

        <Side>
          <Cube>
            <rect x="7.500" y="26.500" width="42" height="42" fill="#e9e9eb" stroke="#999" />
            <rect x="15" y="34" width="26" height="27" fill="#dcdce8" />
            <text x="28.500" y="52" textAnchor="middle" fill="#8d8d98">TOP</text>
            <text x="8" y="24" fill="#a5e8a5">Y</text>
            <text x="1" y="74" fill="#7a6ad8">Z</text>
            <text x="53" y="69" fill="#ec8a90">X</text>
          </Cube>
          <Palette>
            <PanelTitle>
              <Grip />
              <svg width="17" height="7" viewBox="0 0 17 7"><rect x="6" y="0" width="7" height="7" rx="2" fill="#222" /><path d="M7.500 3.500h4" stroke="#888" /></svg>
              SKETCH PALETTE
              <Spacer />
              <svg width="8" height="6" viewBox="0 0 8 6"><path d="M0 0v6l4-3zM4 0v6l4-3z" fill="#222" /></svg>
            </PanelTitle>
            <PaletteBody>
              <Rows>
                <SectionHead><Caret />Options</SectionHead>
                <Row>Look At<button aria-label="Look At"><Mini name="lookAt" /></button></Row>
                {options.map(([name, on]) => (
                  <Row as="label" key={name}>{name}<Check type="checkbox" defaultChecked={on} /></Row>
                ))}
                <SectionHead><Caret />Constraints</SectionHead>
                {constraints.map(([name, icon]) => (
                  <Row key={name}>{name}<button aria-label={name}><Mini name={icon} /></button></Row>
                ))}
              </Rows>
              <Scroll />
            </PaletteBody>
            <PaletteFoot><button>Stop Sketch</button></PaletteFoot>
          </Palette>
        </Side>

        <Comments>
          <PanelTitle>
            <span>COMMENTS</span>
            <svg width="8" height="8" viewBox="0 0 8 8"><circle cx="4" cy="4" r="4" fill="#333" /><path d="M2 4h4" stroke="#ccc" /></svg>
            <Grip />
          </PanelTitle>
        </Comments>

        <Nav>
          <div>
            <NavButton $w={26} aria-label="Orbit"><Mini name="orbit" size={12} /><Caret /></NavButton>
            <NavButton $w={19} aria-label="Look at"><Mini name="lookNav" size={13} /></NavButton>
            <NavButton $w={21} aria-label="Pan"><Mini name="hand" size={13} /></NavButton>
            <NavButton $w={21} aria-label="Zoom"><Mini name="zoom" /></NavButton>
            <NavButton $w={28} aria-label="Zoom window"><Mini name="zoomWin" /><Caret /></NavButton>
          </div>
          <div>
            <NavButton $w={24} aria-label="Display"><Mini name="monitor" size={13} /><Caret /></NavButton>
            <NavButton $w={24} aria-label="Grid"><Mini name="grid" size={13} /><Caret /></NavButton>
            <NavButton $w={24} aria-label="Viewports"><Mini name="split" size={13} /><Caret /></NavButton>
          </div>
        </Nav>

        <Menu>
          {menu.map((g, gi) => (
            <MenuGroup key={gi} $h={g.h}>
              {g.items.map(([label, icon, key]) => (
                <MenuItem key={label} $hover={label === 'Offset'}>
                  {icon ? <Mini name={icon} size={13} /> : <span />}
                  <span>{label}</span>
                  <span>{key && key !== '>' ? key : ''}</span>
                  {key === '>' && <svg width="6" height="7" viewBox="0 0 6 7"><path d="M0 0v7l6-3.500z" fill="#777" /></svg>}
                </MenuItem>
              ))}
            </MenuGroup>
          ))}
        </Menu>
        <Pointer width="10" height="15" viewBox="0 0 10 15"><path d="M1 1v11l2.700-2.300L5.500 14l2-1-1.900-4H9z" fill="#111" stroke="#ddd" strokeWidth=".8" /></Pointer>
        <Tooltip role="tooltip">
          <p>Copies the selected sketch curves a specified distance from the original curves.</p>
          <p>Select the curves to offset then specify the offset distance.</p>
        </Tooltip>
      </Workspace>

      <TimelineBar>
        <Playback>
          {['first', 'prev', 'play', 'next', 'last'].map((n) => <button key={n} aria-label={n}><Mini name={n} /></button>)}
        </Playback>
        <Track>
          {strips.map(([n, c], i) => <Strip key={i} $n={n} $c={c} />)}
          {features.map((f, i) => <Feature key={i} aria-label={featureKinds[f]}><Mini name={featureKinds[f]} /></Feature>)}
          {features.map((_, i) => <Tick key={i} />)}
          <Baseline />
          <Playhead width="10" height="26" viewBox="0 0 10 26"><path d="M0 0h10v4L5 8 0 4z" fill="#555" /><path d="M5 6v20" stroke="#555" strokeWidth="2" /></Playhead>
        </Track>
        <Spacer />
        <button aria-label="Settings"><Mini name="gear" size={13} /></button>
      </TimelineBar>
    </Page>
  );
}
